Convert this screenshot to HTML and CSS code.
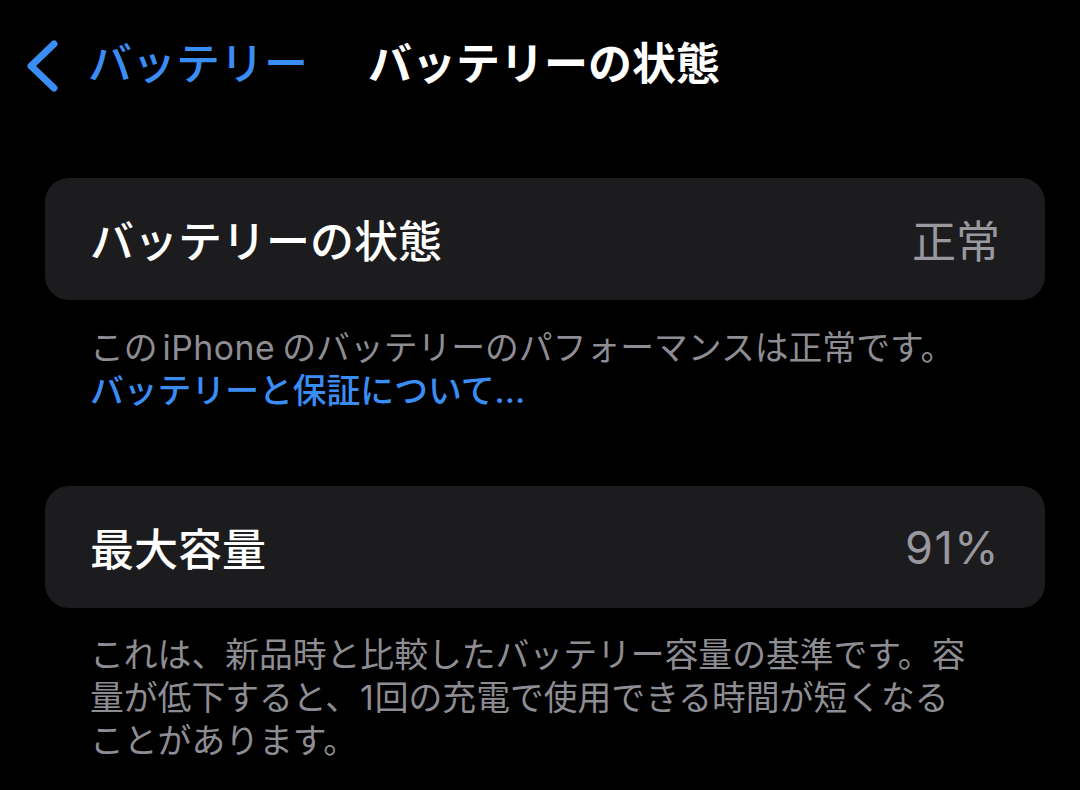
FILE: index.html
```html
<!DOCTYPE html>
<html lang="ja">
<head>
<meta charset="utf-8">
<title>バッテリーの状態</title>
<link rel="stylesheet" href="styles.css">
</head>
<body>
<header class="nav">
  <div class="back">
    <svg class="chev" width="38" height="56" viewBox="0 0 38 56" aria-hidden="true">
      <path d="M32 6 L9 28 L32 50" fill="none" stroke="currentColor" stroke-width="7" stroke-linecap="round" stroke-linejoin="round"/>
    </svg>
    <span class="back-label">バッテリー</span>
  </div>
  <h1 class="title">バッテリーの状態</h1>
  <div class="spacer"></div>
</header>
<main class="content">
  <section class="group group-first">
    <div class="card">
      <span class="label">バッテリーの状態</span>
      <span class="value">正常</span>
    </div>
    <p class="footer">この<span class="latin">iPhone</span>のバッテリーのパフォーマンスは正常です。<br><span class="link">バッテリーと保証について...</span></p>
  </section>
  <section class="group">
    <div class="card">
      <span class="label">最大容量</span>
      <span class="value num">91%</span>
    </div>
    <p class="footer">これは、新品時と比較したバッテリー容量の基準です。容<br>量が低下すると、<span class="digit">1</span>回の充電で使用できる時間が短くなる<br>ことがあります。</p>
  </section>
</main>
</body>
</html>
```

FILE: styles.css
```css
html, body {
  margin: 0;
  padding: 0;
  background: #000;
}
body {
  width: 1080px;
  height: 790px;
  overflow: hidden;
  font-family: "Inter", "Noto Sans CJK JP", sans-serif;
  color: #fff;
}
.nav {
  height: 128px;
  display: grid;
  grid-template-columns: 1fr auto 1fr;
  align-items: center;
}
.back {
  display: flex;
  align-items: center;
  padding-left: 22px;
  color: #3a8df5;
}
.chev {
  display: block;
  flex: none;
  margin-top: 4px;
}
.back-label {
  margin-left: 28px;
  font-size: 44px;
  font-weight: 500;
  line-height: 56px;
}
.title {
  margin: 0;
  padding-left: 8px;
  font-size: 44px;
  font-weight: 700;
  line-height: 56px;
  color: #fff;
}
.content {
  padding: 0 35px 0 45px;
}
.group-first {
  margin-top: 50px;
}
.group + .group {
  margin-top: 74px;
}
.card {
  height: 122px;
  background: #1c1c1e;
  border-radius: 24px;
  padding: 0 45px;
  display: flex;
  align-items: center;
  justify-content: space-between;
}
.label {
  font-size: 44px;
  font-weight: 500;
  color: #fff;
}
.value {
  font-size: 44px;
  font-weight: 400;
  color: #98989e;
}
.num {
  font-size: 45px;
  letter-spacing: 1.5px;
}
.footer {
  margin: 0;
  padding: 26px 40px 0 45px;
  font-size: 33.8px;
  line-height: 43px;
  color: #8d8d93;
}
.latin {
  margin: 0 7px 0 5px;
  letter-spacing: 0.5px;
}
.digit {
  margin: 0 1px;
}
.group + .group .footer {
  padding-top: 25px;
}
.link {
  color: #3a8df5;
  font-weight: 500;
}
```
